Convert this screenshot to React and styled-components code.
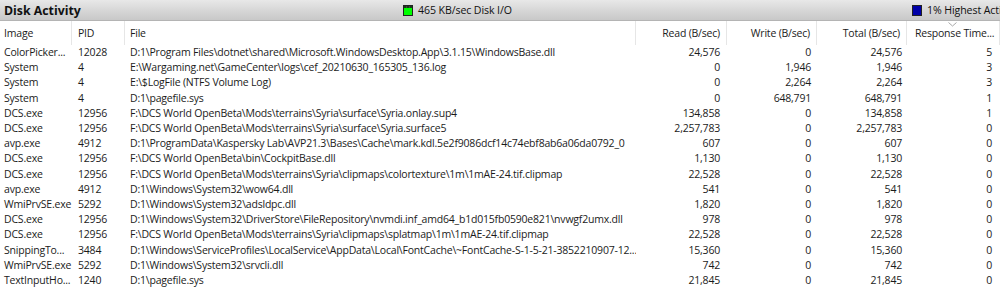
import React from "react";
import styled, { createGlobalStyle } from "styled-components";

const Global = createGlobalStyle`
  html, body { margin: 0; padding: 0; background: #fff; }
  body { font-family: "Open Sans", "Noto Sans", sans-serif; }
`;

const COLS = "72px 53px 511px 91px 90px 90px 93px";

const Panel = styled.div`
  width: 1000px;
  height: 294px;
  overflow: hidden;
  background: #fff;
  color: #1b1b1b;
`;

const TitleBar = styled.div`
  height: 21px;
  display: grid;
  grid-template-columns: 403px 509px 88px;
  align-items: center;
  background: linear-gradient(#e8e8e8, #d4d4d4 60%, #c8c8c8);
  border-bottom: 1px solid #b4b4b4;
  box-sizing: border-box;
  white-space: nowrap;
  overflow: hidden;
`;

const Title = styled.div`
  font-weight: 700;
  font-size: 12.3px;
  padding-left: 4px;
  color: #111;
`;

const Indicator = styled.div`
  display: flex;
  align-items: center;
  gap: 5px;
  font-size: 10.6px;
  letter-spacing: -0.1px;
  color: #111;
  overflow: hidden;
  svg { flex-shrink: 0; }
`;

const HeaderRow = styled.div`
  display: grid;
  grid-template-columns: ${COLS};
  height: 24px;
`;

const HeadCell = styled.div`
  font-size: 10.5px;
  letter-spacing: -0.2px;
  display: flex;
  align-items: center;
  justify-content: ${(p) => (p.$right ? "flex-end" : "flex-start")};
  padding: ${(p) => (p.$right ? "0 6px 0 0" : `0 0 0 ${p.$pl || 5}px`)};
  border-right: 1px solid #e6e6e6;
  white-space: nowrap;
  overflow: hidden;
  position: relative;
  color: #1b1b1b;
`;

const SortMark = styled.svg`
  position: absolute;
  left: 41px;
  top: 1px;
`;

const Row = styled.div`
  display: grid;
  grid-template-columns: ${COLS};
  height: 15.2px;
  align-items: center;
`;

const Cell = styled.div`
  font-size: 10.5px;
  letter-spacing: -0.2px;
  line-height: 15px;
  white-space: nowrap;
  overflow: hidden;
  text-align: ${(p) => (p.$right ? "right" : "left")};
  padding: ${(p) => (p.$right ? `0 ${p.$pr || 6}px 0 0` : `0 0 0 ${p.$pl || 5}px`)};
`;

function Swatch({ fill, graph }) {
  return (
    <svg width="10" height="11" viewBox="0 0 10 11">
      <rect x="0" y="0" width="10" height="11" fill="#222" />
      <rect x="1" y="1" width="8" height="9" fill={fill} />
      {graph && (
        <>
          <rect x="1" y="1" width="8" height="2" fill="#1a3a1a" />
          <line x1="3.5" y1="1" x2="3.5" y2="3" stroke="#555" strokeWidth="0.6" />
          <line x1="6.5" y1="1" x2="6.5" y2="3" stroke="#555" strokeWidth="0.6" />
        </>
      )}
    </svg>
  );
}

const rows = [
  ["ColorPicker...", "12028", "D:1\\Program Files\\dotnet\\shared\\Microsoft.WindowsDesktop.App\\3.1.15\\WindowsBase.dll", "24,576", "0", "24,576", "5"],
  ["System", "4", "E:\\Wargaming.net\\GameCenter\\logs\\cef_20210630_165305_136.log", "0", "1,946", "1,946", "3"],
  ["System", "4", "E:\\$LogFile (NTFS Volume Log)", "0", "2,264", "2,264", "3"],
  ["System", "4", "D:1\\pagefile.sys", "0", "648,791", "648,791", "1"],
  ["DCS.exe", "12956", "F:\\DCS World OpenBeta\\Mods\\terrains\\Syria\\surface\\Syria.onlay.sup4", "134,858", "0", "134,858", "1"],
  ["DCS.exe", "12956", "F:\\DCS World OpenBeta\\Mods\\terrains\\Syria\\surface\\Syria.surface5", "2,257,783", "0", "2,257,783", "0"],
  ["avp.exe", "4912", "D:1\\ProgramData\\Kaspersky Lab\\AVP21.3\\Bases\\Cache\\mark.kdl.5e2f9086dcf14c74ebf8ab6a06da0792_0", "607", "0", "607", "0"],
  ["DCS.exe", "12956", "F:\\DCS World OpenBeta\\bin\\CockpitBase.dll", "1,130", "0", "1,130", "0"],
  ["DCS.exe", "12956", "F:\\DCS World OpenBeta\\Mods\\terrains\\Syria\\clipmaps\\colortexture\\1m\\1mAE-24.tif.clipmap", "22,528", "0", "22,528", "0"],
  ["avp.exe", "4912", "D:1\\Windows\\System32\\wow64.dll", "541", "0", "541", "0"],
  ["WmiPrvSE.exe", "5292", "D:1\\Windows\\System32\\adsldpc.dll", "1,820", "0", "1,820", "0"],
  ["DCS.exe", "12956", "D:1\\Windows\\System32\\DriverStore\\FileRepository\\nvmdi.inf_amd64_b1d015fb0590e821\\nvwgf2umx.dll", "978", "0", "978", "0"],
  ["DCS.exe", "12956", "F:\\DCS World OpenBeta\\Mods\\terrains\\Syria\\clipmaps\\splatmap\\1m\\1mAE-24.tif.clipmap", "22,528", "0", "22,528", "0"],
  ["SnippingTo...", "3484", "D:1\\Windows\\ServiceProfiles\\LocalService\\AppData\\Local\\FontCache\\~FontCache-S-1-5-21-3852210907-12...", "15,360", "0", "15,360", "0"],
  ["WmiPrvSE.exe", "5292", "D:1\\Windows\\System32\\srvcli.dll", "742", "0", "742", "0"],
  ["TextInputHo...", "1240", "D:1\\pagefile.sys", "21,845", "0", "21,845", "0"],
];

export default function App() {
  return (
    <>
      <Global />
      <Panel>
        <TitleBar>
          <Title>Disk Activity</Title>
          <Indicator>
            <Swatch fill="#00ff00" graph />
            <span>465 KB/sec Disk I/O</span>
          </Indicator>
          <Indicator>
            <Swatch fill="#0000a8" />
            <span>1% Highest Active Time</span>
          </Indicator>
        </TitleBar>
        <HeaderRow>
          <HeadCell $pl={4}>Image</HeadCell>
          <HeadCell $pl={6}>PID</HeadCell>
          <HeadCell>File</HeadCell>
          <HeadCell $right>Read (B/sec)</HeadCell>
          <HeadCell $right>Write (B/sec)</HeadCell>
          <HeadCell $right>Total (B/sec)</HeadCell>
          <HeadCell $pl={8}>
            Response Time...
            <SortMark width="9" height="5" viewBox="0 0 9 5">
              <polyline points="0.5,0.5 4.5,4 8.5,0.5" fill="none" stroke="#a8a8a8" strokeWidth="1" />
            </SortMark>
          </HeadCell>
        </HeaderRow>
        {rows.map((r, i) => (
          <Row key={i}>
            <Cell $pl={4}>{r[0]}</Cell>
            <Cell $pl={6}>{r[1]}</Cell>
            <Cell>{r[2]}</Cell>
            <Cell $right $pr={7}>{r[3]}</Cell>
            <Cell $right>{r[4]}</Cell>
            <Cell $right $pr={5}>{r[5]}</Cell>
            <Cell $right $pr={8}>{r[6]}</Cell>
          </Row>
        ))}
      </Panel>
    </>
  );
}
